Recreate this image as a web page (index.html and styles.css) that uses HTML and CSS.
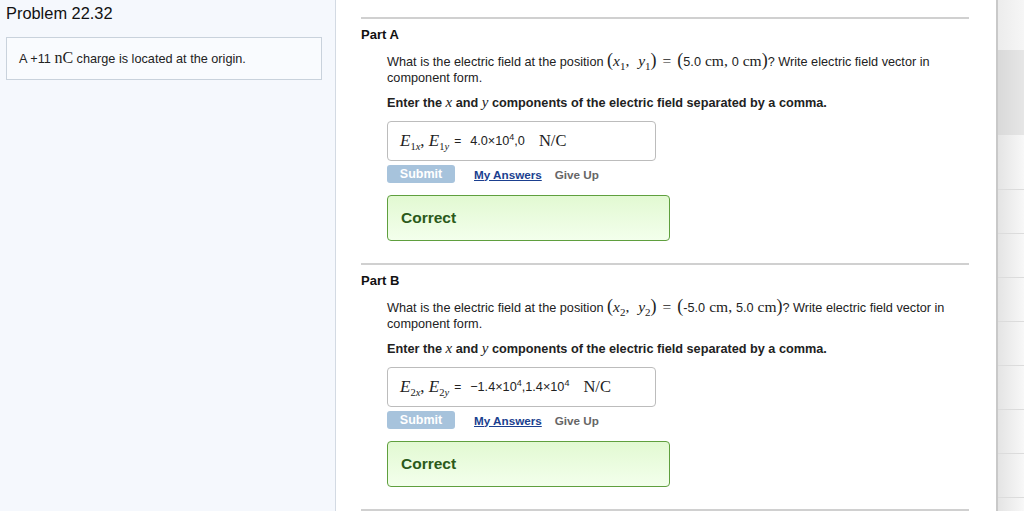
FILE: index.html
```html
<!doctype html>
<html lang="en">

<head>
    <meta charset="utf-8">
    <meta name="viewport" content="width=device-width, initial-scale=1">
    <title>Problem 22.32</title>

    <link rel="stylesheet" href="styles.css">

</head>

<body>
    <div class="problem">
        <h1 class="problem-title">Problem 22.32</h1>
        <div class="intro">A +11 <span class="rm">nC</span> charge is located at the origin.</div>
    </div>

    <div class="main">
        <!-- Part A -->
        <div class="part">
            <h2 class="part-title">Part A</h2>
            <div class="part-body">
                <p class="question">What is the electric field at the position
                    <span class="math"><span class="paren">(</span><i>x</i><sub>1</sub>, <i class="sp">y</i><sub>1</sub><span class="paren">)</span><span class="rel">=</span><span class="paren">(</span><span class="num">5.0</span><span class="cm">cm</span>, <span class="num">0</span><span class="cm">cm</span><span class="paren">)</span></span>?
                    Write electric field vector in component form.</p>
                <p class="ask">Enter the <i class="mv">x</i> and <i class="mv">y</i> components of the electric field separated by a comma.</p>

                <div class="answer">
                    <span class="label"><i>E</i><sub>1<i>x</i></sub>, <i>E</i><sub>1<i>y</i></sub></span>
                    <span class="eq">=</span>
                    <span class="value">4.0×10<sup>4</sup>,0</span>
                    <span class="unit">N/C</span>
                </div>

                <div class="actions">
                    <button class="submit">Submit</button>
                    <a class="my-answers" href="#">My Answers</a>
                    <span class="give-up">Give Up</span>
                </div>

                <div class="correct">Correct</div>
            </div>
        </div>

        <!-- Part B -->
        <div class="part">
            <h2 class="part-title">Part B</h2>
            <div class="part-body">
                <p class="question">What is the electric field at the position
                    <span class="math"><span class="paren">(</span><i>x</i><sub>2</sub>, <i class="sp">y</i><sub>2</sub><span class="paren">)</span><span class="rel">=</span><span class="paren">(</span><span class="num">-5.0</span><span class="cm">cm</span>, <span class="num">5.0</span><span class="cm">cm</span><span class="paren">)</span></span>?
                    Write electric field vector in component form.</p>
                <p class="ask">Enter the <i class="mv">x</i> and <i class="mv">y</i> components of the electric field separated by a comma.</p>

                <div class="answer">
                    <span class="label"><i>E</i><sub>2<i>x</i></sub>, <i>E</i><sub>2<i>y</i></sub></span>
                    <span class="eq">=</span>
                    <span class="value">−1.4×10<sup>4</sup>,1.4×10<sup>4</sup></span>
                    <span class="unit">N/C</span>
                </div>

                <div class="actions">
                    <button class="submit">Submit</button>
                    <a class="my-answers" href="#">My Answers</a>
                    <span class="give-up">Give Up</span>
                </div>

                <div class="correct">Correct</div>
            </div>
        </div>
        <div class="rule"></div>
    </div>

    <div class="rail">
        <div class="rail-top"></div>
        <div class="rail-band"></div>
        <div class="rail-row first"></div>
        <div class="rail-row"></div>
        <div class="rail-row"></div>
        <div class="rail-row"></div>
        <div class="rail-row"></div>
        <div class="rail-row"></div>
        <div class="rail-row"></div>
        <div class="rail-row"></div>
    </div>
</body>

</html>
```

FILE: styles.css
```css
body {
    margin: 0;
    height: 511px;
    overflow: hidden;
    display: flex;
    font-family: "Liberation Sans", Arial, Helvetica, sans-serif;
    font-size: 12.7px;
    color: #222;
    background-color: #fff;
}

/* left problem panel */
.problem {
    width: 335px;
    flex-shrink: 0;
    background-color: #f5f8fd;
    border-right: 1px solid #d3dae3;
}

.problem-title {
    margin: 4px 0 0 6px;
    font-size: 16.4px;
    font-weight: normal;
    line-height: 19px;
    color: #111;
}

.intro {
    margin: 14px 13px 0 6px;
    height: 41px;
    padding-left: 12px;
    line-height: 40px;
    background-color: #f9fbfe;
    border: 1px solid #c9d2dc;
    color: #222;
}

.rm {
    font-family: "Liberation Serif", "Times New Roman", serif;
    font-size: 16px;
}

/* main column */
.main {
    flex: 1;
    padding: 17px 27px 0 25px;
}

.part,
.rule {
    border-top: 2px solid #d0d0d0;
}

.part {
    height: 244px;
}

.part-title {
    margin: 8px 0 0 0;
    font-size: 13px;
    line-height: 16px;
    color: #111;
}

.part-body {
    padding-left: 26px;
}

.question {
    margin: 11px 0 0 0;
    line-height: 16px;
    width: 575px;
}

.math {
    font-family: "Liberation Serif", "Times New Roman", serif;
    font-size: 15.5px;
    line-height: 0;
}

.math sub {
    font-style: normal;
    font-size: 11px;
    line-height: 0;
}

.math .sp {
    margin-left: 5px;
}

.math .rel {
    margin: 0 6px;
}

.math .num {
    font-family: "Liberation Sans", Arial, sans-serif;
    font-size: 12.7px;
}

.math .cm {
    margin-left: 4px;
}

.paren {
    font-size: 18px;
}

.ask {
    margin: 9px 0 0 0;
    line-height: 16px;
    font-weight: bold;
}

.mv {
    font-family: "Liberation Serif", "Times New Roman", serif;
    font-weight: normal;
    font-size: 15px;
    line-height: 0;
}

/* answer input */
.answer {
    margin-top: 10px;
    width: 255px;
    height: 38px;
    padding-left: 12px;
    display: flex;
    align-items: center;
    border: 1px solid #bcbcbc;
    border-radius: 4px;
}

.label {
    font-family: "Liberation Serif", "Times New Roman", serif;
    font-size: 17px;
}

.label sub {
    font-size: 10.5px;
    line-height: 0;
}

.eq {
    margin: 0 9px 0 5px;
    font-size: 12px;
}

.value {
    font-size: 12.7px;
}

.value sup {
    font-size: 9px;
    line-height: 0;
}

.unit {
    margin-left: 14px;
    font-family: "Liberation Serif", "Times New Roman", serif;
    font-size: 16.5px;
}

/* buttons */
.actions {
    margin-top: 4px;
    display: flex;
    align-items: center;
    height: 18px;
}

.submit {
    width: 68px;
    height: 18px;
    padding: 0;
    border: none;
    border-radius: 3px;
    background-color: #a7c3dc;
    color: #fff;
    font-family: "Liberation Sans", Arial, sans-serif;
    font-size: 12.5px;
    font-weight: bold;
}

.my-answers {
    margin-left: 19px;
    color: #1b3f8f;
    font-weight: bold;
    font-size: 11.7px;
}

.give-up {
    margin-left: 13px;
    color: #666;
    font-weight: bold;
    font-size: 11.7px;
}

.correct {
    margin-top: 12px;
    width: 268px;
    height: 44px;
    padding-left: 13px;
    line-height: 44px;
    border: 1px solid #5f9f3e;
    border-radius: 4px;
    background: linear-gradient(#e2f9d2, #f3ffec);
    color: #2b5a1a;
    font-size: 15.5px;
    font-weight: bold;
}

/* right rail */
.rail {
    width: 26px;
    flex-shrink: 0;
    border-left: 2px solid #c9c9c9;
    background: linear-gradient(to right, #e4e4e4, #f8f8f8);
}

.rail-top {
    height: 50px;
    background: linear-gradient(to right, #ececec, #f6f6f6);
}

.rail-band {
    height: 85px;
    background: linear-gradient(to right, #d9d9d9, #e6e6e6);
}

.rail-row {
    height: 43px;
    border-bottom: 1px solid #dcdcdc;
}

.rail-row.first {
    height: 54px;
}
```
